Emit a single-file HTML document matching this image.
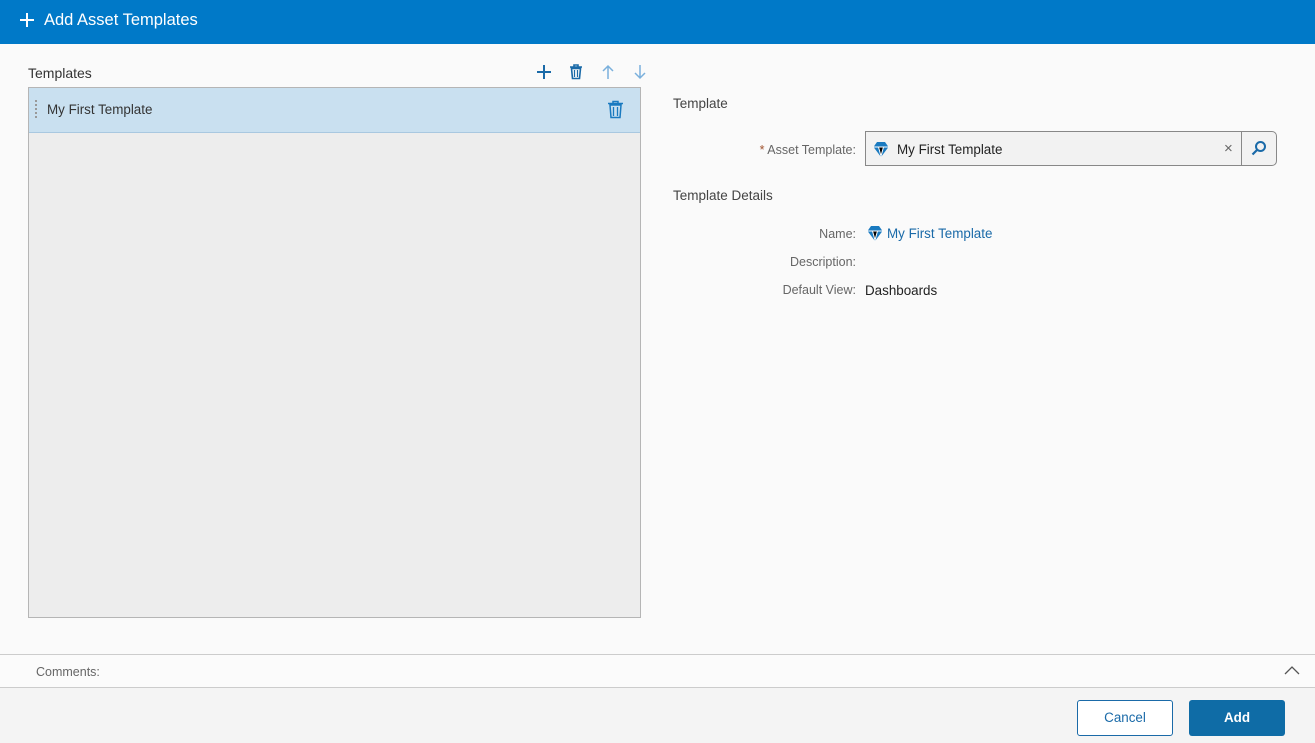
<!DOCTYPE html><html><head><style>
*{box-sizing:border-box;margin:0;padding:0}
body{width:1315px;height:743px;background:#fafafa;font-family:"Liberation Sans",sans-serif;font-size:13.4px;color:#333;position:relative;overflow:hidden}
.a{position:absolute}
.hdr{left:0;top:0;width:1315px;height:44px;background:#0079c8;color:#fff;font-size:16.5px}
.lbl{color:#666;text-align:right;width:200px;font-size:12.5px}
</style></head><body>
<div class="a hdr"><svg class="a" style="left:19px;top:12px" width="16" height="16"><path d="M8 1v14M1 8h14" stroke="#fff" stroke-width="2"/></svg><span class="a" style="left:44px;top:11px">Add Asset Templates</span></div>
<div class="a" style="left:28px;top:65px;font-size:14px;color:#333">Templates</div>
<svg class="a" style="left:536px;top:64px" width="16" height="16"><path d="M8 1v14M1 8h14" stroke="#1a6aa8" stroke-width="2"/></svg>
<svg class="a" style="left:569px;top:64px" width="14" height="16"><path d="M1 3h12M5 3V1h4v2M2.5 4.5h9l-1 10h-7z" fill="none" stroke="#1a6aa8" stroke-width="1.6"/><path d="M5.5 6v7M8.5 6v7" stroke="#1a6aa8" stroke-width="1.2"/></svg>
<svg class="a" style="left:601px;top:64px" width="14" height="16"><path d="M7 15V2M2 7l5-5 5 5" fill="none" stroke="#7ab0dc" stroke-width="1.5"/></svg>
<svg class="a" style="left:633px;top:64px" width="14" height="16"><path d="M7 1v13M2 9l5 5 5-5" fill="none" stroke="#7ab0dc" stroke-width="1.5"/></svg>
<div class="a" style="left:28px;top:87px;width:613px;height:531px;border:1px solid #b5b5b5;background:#ededed"></div>
<div class="a" style="left:29px;top:88px;width:611px;height:45px;background:#c9e0f0;border-bottom:1px solid #a9c8e0"></div>
<div class="a" style="left:35px;top:100px;width:3px;height:18px;border-left:2px dotted #999"></div>
<div class="a" style="left:47px;top:102px">My First Template</div>
<svg class="a" style="left:607px;top:100px" width="17" height="19"><path d="M1 3.5h15M6 3.5V1.5h5v2M3 5h11l-1 12.5H4z" fill="none" stroke="#1a7ac0" stroke-width="1.5"/><path d="M6.5 7v9M10.5 7v9" stroke="#1a7ac0" stroke-width="1.3"/></svg>
<div class="a" style="left:673px;top:96px;font-size:13.5px;color:#444">Template</div>
<div class="a lbl" style="left:656px;top:143px"><span style="color:#a0522d">*</span> Asset Template:</div>
<div class="a" style="left:865px;top:131px;width:412px;height:35px;border:1px solid #888;border-radius:0 5px 5px 0;background:#f2f2f2"></div>
<div class="a" style="left:1241px;top:131px;width:1px;height:35px;background:#888"></div>
<svg class="a" style="left:872px;top:141px" width="18" height="17"><path d="M1.5 6l3.5-5h8l3.5 5-7.5 10z" fill="#1a7ac0"/><path d="M1.5 6h15M6.5 6l2.5 9 2.5-9" stroke="#fff" stroke-width="1"/></svg>
<div class="a" style="left:897px;top:142px;color:#222">My First Template</div>
<div class="a" style="left:1224px;top:140px;color:#666;font-size:15px">×</div>
<svg class="a" style="left:1251px;top:140px" width="16" height="16"><circle cx="9.5" cy="6.5" r="4.5" fill="none" stroke="#1a6aa8" stroke-width="2"/><path d="M6 10l-4.5 4.5" stroke="#1a6aa8" stroke-width="2.2"/></svg>
<div class="a" style="left:673px;top:188px;font-size:13.5px;color:#444">Template Details</div>
<div class="a lbl" style="left:656px;top:227px">Name:</div>
<svg class="a" style="left:866px;top:225px" width="18" height="17"><path d="M1.5 6l3.5-5h8l3.5 5-7.5 10z" fill="#1a7ac0"/><path d="M1.5 6h15M6.5 6l2.5 9 2.5-9" stroke="#fff" stroke-width="1"/></svg>
<div class="a" style="left:887px;top:226px;color:#1a6aa8">My First Template</div>
<div class="a lbl" style="left:656px;top:255px">Description:</div>
<div class="a lbl" style="left:656px;top:283px">Default View:</div>
<div class="a" style="left:865px;top:283px;color:#222">Dashboards</div>
<div class="a" style="left:0;top:654px;width:1315px;height:34px;border-top:1px solid #ccc;border-bottom:1px solid #ccc;background:#fbfbfb"></div>
<div class="a" style="left:36px;top:665px;color:#666;font-size:12.5px">Comments:</div>
<svg class="a" style="left:1284px;top:665px" width="16" height="10"><path d="M1 9l7-7 7 7" fill="none" stroke="#555" stroke-width="1.3"/></svg>
<div class="a" style="left:0;top:688px;width:1315px;height:55px;background:#f4f4f4"></div>
<div class="a" style="left:1077px;top:700px;width:96px;height:36px;border:1px solid #1a6aa8;border-radius:3px;background:#fff;color:#1a6aa8;text-align:center;line-height:34px">Cancel</div>
<div class="a" style="left:1189px;top:700px;width:96px;height:36px;border-radius:3px;background:#0f6ca6;color:#fff;text-align:center;line-height:36px;font-weight:bold">Add</div>
</body></html>
